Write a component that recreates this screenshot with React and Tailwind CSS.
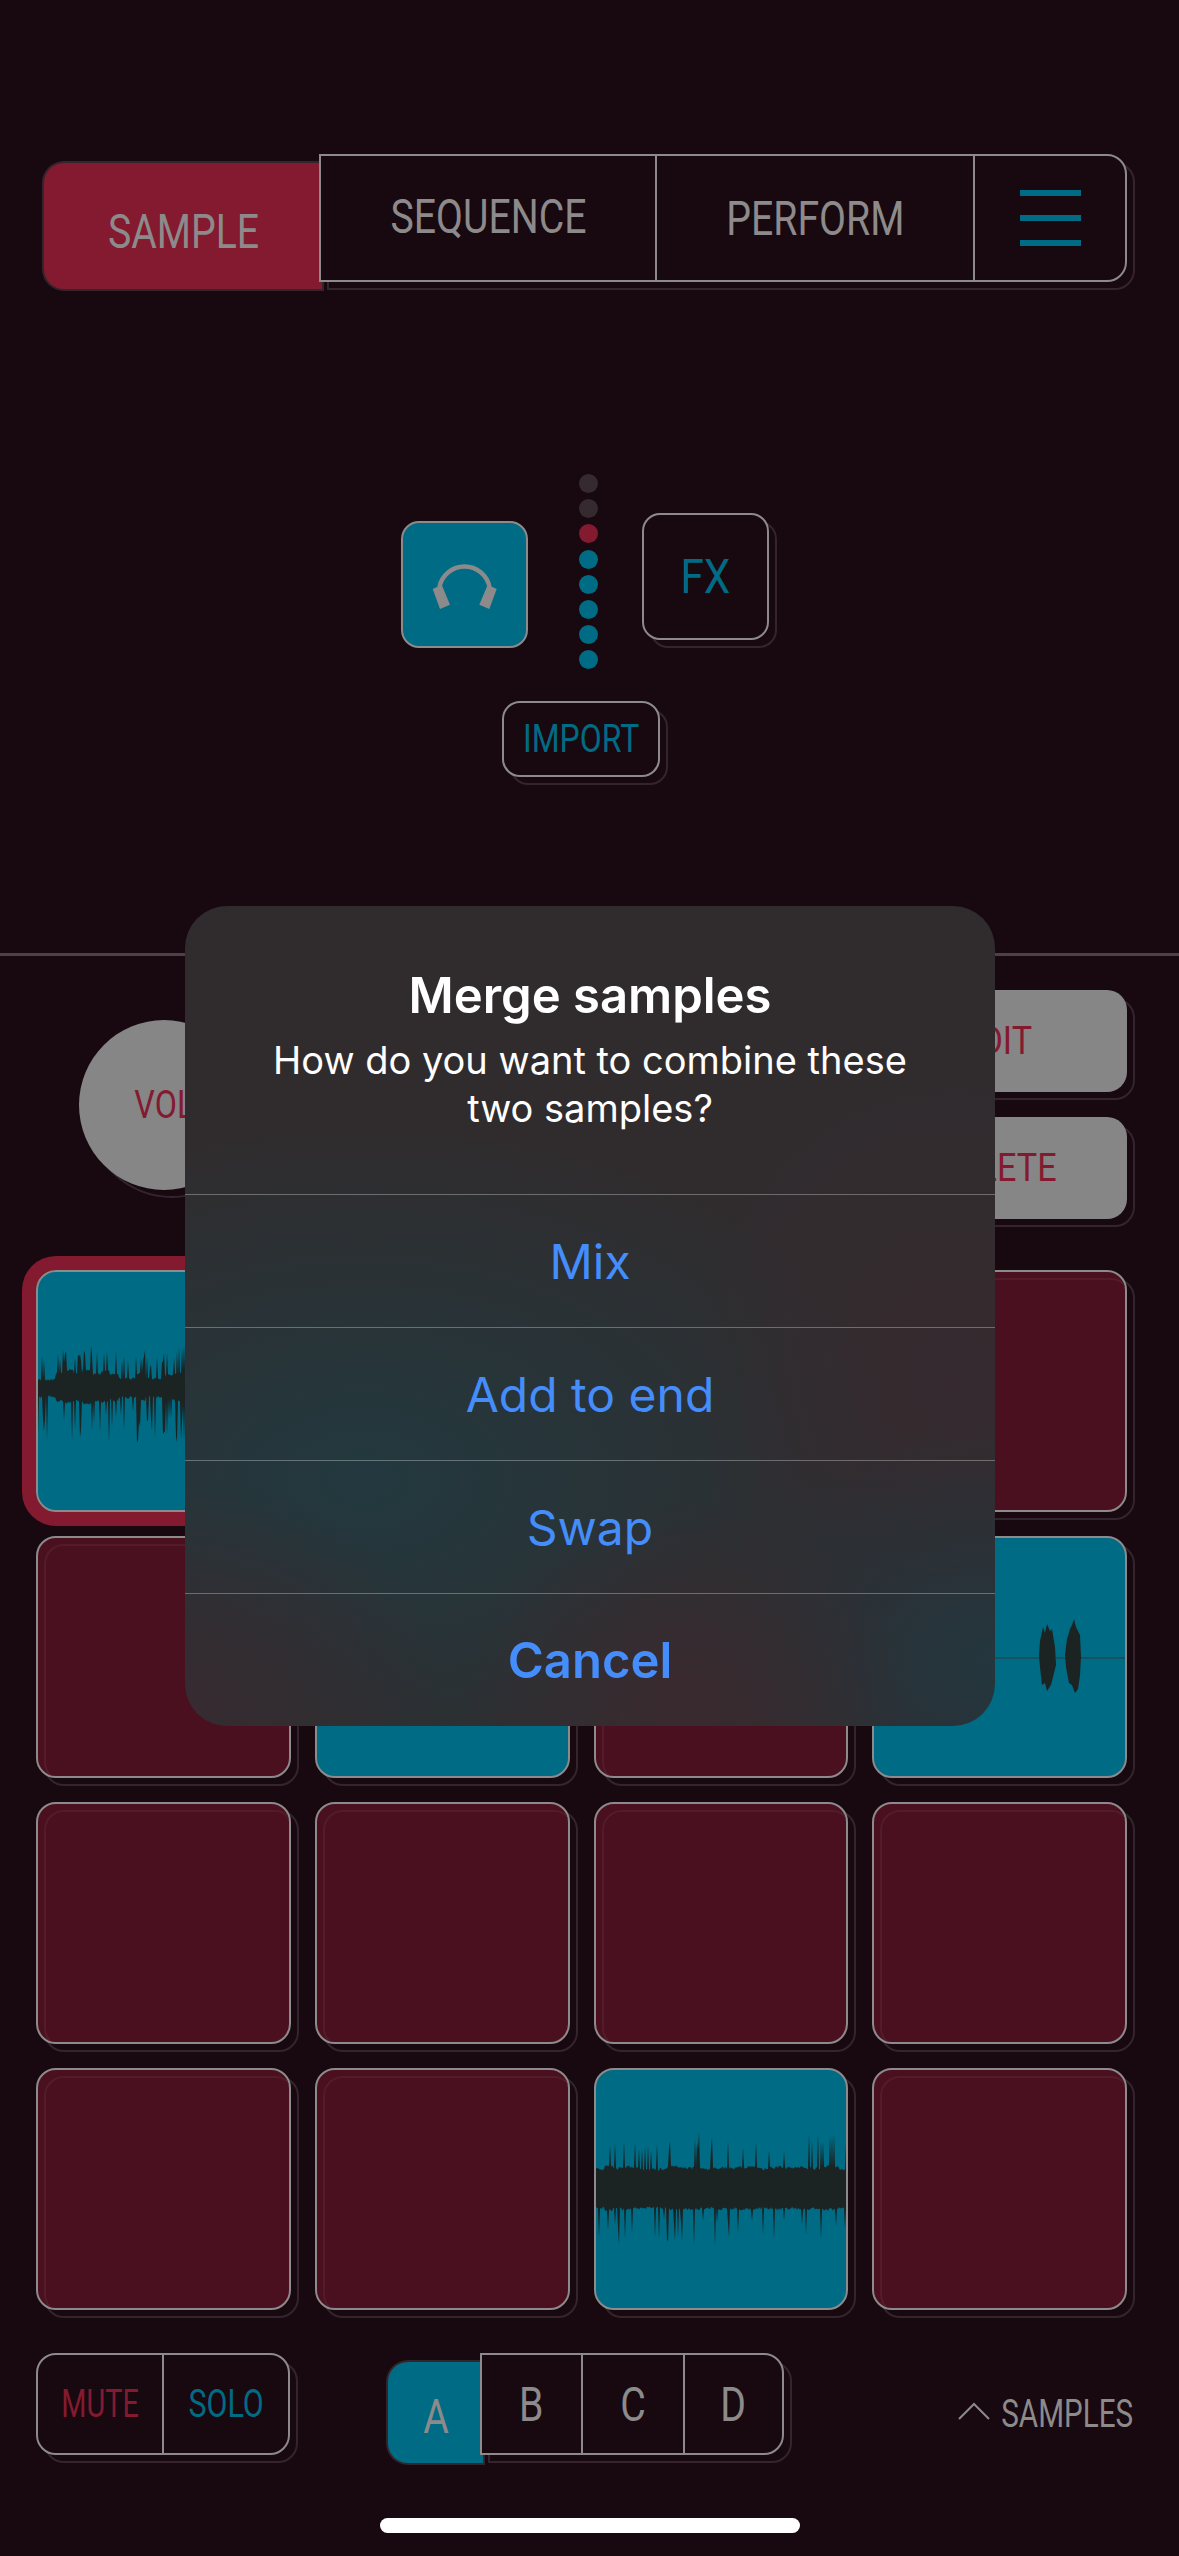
import React from 'react';

const FONT = 'font-["Roboto","Liberation_Sans",sans-serif]';

// seeded noise so the waveforms stay the same on every render
function makeRand(seed) {
  let s = seed;
  return () => {
    s = (s * 16807) % 2147483647;
    return (s - 1) / 2147483646;
  };
}

function buildWave(seed, w, opts) {
  const r = makeRand(seed);
  const top = [];
  const bot = [];
  let swell = 0;
  for (let x = 0; x <= w; x += 1) {
    if (x % 9 === 0) swell = r() * opts.jag;
    let up = opts.bodyUp + swell + r() * 3;
    let down = opts.bodyDown + swell * 0.7 + r() * 3;
    if (r() < opts.chance) up += (0.4 + r() * 0.6) * opts.spikeUp;
    if (r() < opts.chance) down += (0.3 + r() * 0.7) * opts.spikeDown;
    top.push(`${x},${(opts.mid - up).toFixed(1)}`);
    bot.unshift(`${x},${(opts.mid + down).toFixed(1)}`);
  }
  return `M${top.join('L')}L${bot.join('L')}Z`;
}

function Waveform({ seed, w, h, opts }) {
  return (
    <svg width={w} height={h} viewBox={`0 0 ${w} ${h}`}>
      <path d={buildWave(seed, w, opts)} fill="#1b2323" />
    </svg>
  );
}

function Blobs() {
  return (
    <svg width="250" height="80" viewBox="0 0 250 80">
      <path d="M0 41H250" stroke="#1a4a58" strokeWidth="1.5" />
      <path d="M165 24L168 10L170 16L172 7L175 14L177 12L180 30L181 48L178 60L176 68L172 74L170 66L167 68L165 50L164 38Z" fill="#1b2323" />
      <path d="M192 22L195 12L197 8L199 2L201 10L205 18L206 40L205 58L203 72L200 76L197 68L194 66L191 50L190 38Z" fill="#1b2323" />
    </svg>
  );
}

// the faint outline that sits behind raised controls, 8px down and right
function Ghost({ radius }) {
  return <div className={`absolute top-2 left-2 -right-2 -bottom-2 border-2 border-[#33252b] pointer-events-none ${radius}`}></div>;
}

function Squeezed({ children, className, scale = 'scale-x-[0.8]' }) {
  return <span className={`inline-block whitespace-nowrap ${FONT} ${scale} ${className}`}>{children}</span>;
}

function TabCell({ children, className = '' }) {
  return <div className={`flex items-center justify-center ${className}`}>{children}</div>;
}

function Pad({ kind, children, selected }) {
  const fill = kind === 'teal' ? 'bg-[#006b84]' : 'bg-[#4a101f]';
  return (
    <div className={`relative h-[242px] rounded-[20px] ${selected ? 'shadow-[0_0_0_14px_#841a2f]' : ''}`}>
      {!selected && <Ghost radius="rounded-[20px]" />}
      <div className={`relative flex h-full items-center justify-center overflow-hidden rounded-[20px] border-2 border-[#8c8a8a] ${fill}`}>
        {kind === 'red' && <div className="absolute top-[6px] left-[6px] h-full w-full rounded-[20px] border-2 border-[#521c2b]"></div>}
        <div className="relative">{children}</div>
      </div>
    </div>
  );
}

const dots = ['#352a2d', '#352a2d', '#841a2f', '#006b84', '#006b84', '#006b84', '#006b84', '#006b84'];

export default function App() {
  return (
    <div className={`relative h-[2556px] w-[1179px] overflow-hidden bg-[#18080f] ${FONT}`}>
      {/* Main tabs */}
      <div className="flex items-start pt-[154px] pl-[44px]">
        <div className="mt-[9px] flex h-[126px] w-[278px] items-center justify-center rounded-l-[20px] bg-[#841a2f] pt-[10px] shadow-[0_0_0_2px_#33252b]">
          <Squeezed className="text-[49px] leading-none text-[#8c8a8a]">SAMPLE</Squeezed>
        </div>
        <div className="relative -ml-[3px] h-[128px] w-[808px]">
          <Ghost radius="rounded-r-[20px]" />
          <div className="relative flex h-full rounded-r-[20px] border-2 border-[#8c8a8a] bg-[#18080f]">
            <TabCell className="w-[336px] border-r-2 border-[#8c8a8a] pb-[4px]">
              <Squeezed className="text-[49px] leading-none text-[#8c8a8a]">SEQUENCE</Squeezed>
            </TabCell>
            <TabCell className="w-[318px] border-r-2 border-[#8c8a8a]">
              <Squeezed className="text-[49px] leading-none text-[#8c8a8a]">PERFORM</Squeezed>
            </TabCell>
            <TabCell className="flex-1 flex-col gap-[19px]">
              <div className="h-[6px] w-[61px] bg-[#006b84]"></div>
              <div className="h-[6px] w-[61px] bg-[#006b84]"></div>
              <div className="h-[6px] w-[61px] bg-[#006b84]"></div>
            </TabCell>
          </div>
        </div>
      </div>

      {/* Monitor, meter, FX */}
      <div className="mt-[185px] ml-[401px] flex items-start">
        <div className="mt-[47px] flex h-[127px] w-[127px] items-center justify-center rounded-[18px] border-2 border-[#8c8a8a] bg-[#006b84]">
          <svg width="70" height="54" viewBox="0 0 70 54">
            <path d="M9.5 29A25.5 25.5 0 0 1 59.5 29" stroke="#8c8a8a" strokeWidth="4.5" fill="none" />
            <path d="M2.7 31L11.7 26.7L20 46.7L10 51Z" fill="#8c8a8a" />
            <path d="M66.7 31L57.7 26.7L49.3 46.7L59.3 51Z" fill="#8c8a8a" />
          </svg>
        </div>
        <div className="ml-[51px] flex w-[19px] flex-col gap-[6.2px]">
          {dots.map((c, i) => (
            <div key={i} className="h-[19px] w-[19px] rounded-full" style={{ backgroundColor: c }}></div>
          ))}
        </div>
        <div className="relative mt-[39px] ml-[44px] h-[127px] w-[127px]">
          <Ghost radius="rounded-[18px]" />
          <div className="relative flex h-full items-center justify-center rounded-[18px] border-2 border-[#8c8a8a] bg-[#18080f]">
            <Squeezed scale="scale-x-[0.88]" className="text-[48px] leading-none text-[#006b84]">FX</Squeezed>
          </div>
        </div>
      </div>

      <div className="relative mt-[32px] ml-[502px] h-[76px] w-[158px]">
        <Ghost radius="rounded-[18px]" />
        <div className="relative flex h-full items-center justify-center rounded-[18px] border-2 border-[#8c8a8a] bg-[#18080f]">
          <Squeezed scale="scale-x-[0.84]" className="text-[38px] leading-none text-[#006b84]">IMPORT</Squeezed>
        </div>
      </div>

      <div className="mt-[176px] h-[3px] bg-[#4f4048]"></div>

      {/* Volume and sample actions */}
      <div className="mt-[34px] flex items-start justify-between pr-[52px] pl-[79px]">
        <div className="relative mt-[30px] h-[170px] w-[170px]">
          <Ghost radius="rounded-full" />
          <div className="relative flex h-full items-center justify-center rounded-full bg-[#868686]">
            <Squeezed scale="scale-x-[0.85]" className="text-[38px] leading-none text-[#841a2f]">VOL</Squeezed>
          </div>
        </div>
        <div className="flex w-[260px] flex-col gap-[25px]">
          {['EDIT', 'DELETE'].map((label) => (
            <div key={label} className="relative h-[102px]">
              <Ghost radius="rounded-[20px]" />
              <div className="relative flex h-full items-center justify-center rounded-[20px] bg-[#868686]">
                <Squeezed scale="scale-x-[0.9]" className="text-[38px] leading-none text-[#841a2f]">{label}</Squeezed>
              </div>
            </div>
          ))}
        </div>
      </div>

      {/* Pads */}
      <div className="mt-[51px] grid grid-cols-4 gap-x-[24px] gap-y-[24px] pr-[52px] pl-[36px]">
        <Pad kind="teal" selected>
          <Waveform seed={77} w={250} h={120} opts={{ mid: 60, bodyUp: 10, bodyDown: 4, jag: 10, chance: 0.3, spikeUp: 26, spikeDown: 44 }} />
        </Pad>
        <Pad kind="red" />
        <Pad kind="red" />
        <Pad kind="red" />
        <Pad kind="red" />
        <Pad kind="teal" />
        <Pad kind="red" />
        <Pad kind="teal">
          <Blobs />
        </Pad>
        <Pad kind="red" />
        <Pad kind="red" />
        <Pad kind="red" />
        <Pad kind="red" />
        <Pad kind="red" />
        <Pad kind="red" />
        <Pad kind="teal">
          <Waveform seed={4242} w={250} h={120} opts={{ mid: 60, bodyUp: 18, bodyDown: 17, jag: 3, chance: 0.13, spikeUp: 36, spikeDown: 38 }} />
        </Pad>
        <Pad kind="red" />
      </div>

      {/* Bottom controls */}
      <div className="mt-[43px] flex items-start pl-[36px]">
        <div className="relative h-[102px] w-[254px]">
          <Ghost radius="rounded-[20px]" />
          <div className="relative flex h-full rounded-[20px] border-2 border-[#8c8a8a] bg-[#18080f]">
            <TabCell className="w-[126px] border-r-2 border-[#8c8a8a]">
              <Squeezed scale="scale-x-[0.76]" className="text-[38px] leading-none text-[#841a2f]">MUTE</Squeezed>
            </TabCell>
            <TabCell className="flex-1">
              <Squeezed scale="scale-x-[0.8]" className="text-[38px] leading-none text-[#006b84]">SOLO</Squeezed>
            </TabCell>
          </div>
        </div>
        <div className="mt-[9px] ml-[98px] flex h-[101px] w-[95px] items-center justify-center rounded-l-[20px] bg-[#006b84] pt-[8px] shadow-[0_0_0_2px_#33252b]">
          <Squeezed className="text-[49px] leading-none text-[#8c8a8a]">A</Squeezed>
        </div>
        <div className="relative -ml-[3px] h-[102px] w-[304px]">
          <Ghost radius="rounded-r-[20px]" />
          <div className="relative flex h-full rounded-r-[20px] border-2 border-[#8c8a8a] bg-[#18080f]">
            <TabCell className="w-[101px] border-r-2 border-[#8c8a8a]">
              <Squeezed className="text-[49px] leading-none text-[#8c8a8a]">B</Squeezed>
            </TabCell>
            <TabCell className="w-[102px] border-r-2 border-[#8c8a8a]">
              <Squeezed className="text-[49px] leading-none text-[#8c8a8a]">C</Squeezed>
            </TabCell>
            <TabCell className="flex-1">
              <Squeezed className="text-[49px] leading-none text-[#8c8a8a]">D</Squeezed>
            </TabCell>
          </div>
        </div>
        <div className="mt-[42px] ml-auto flex items-center pr-[46px]">
          <svg className="-mt-[6px]" width="32" height="18" viewBox="0 0 32 18">
            <path d="M1 17L16 2L31 17" stroke="#8c8a8a" strokeWidth="2" fill="none" />
          </svg>
          <Squeezed scale="scale-x-[0.78]" className="-ml-[26px] origin-right text-[38px] leading-none text-[#8c8a8a]">SAMPLES</Squeezed>
        </div>
      </div>

      <div className="mx-auto mt-[55px] h-[15px] w-[420px] rounded-full bg-white"></div>

      {/* Merge dialog */}
      <div className="absolute top-[906px] left-[185px] w-[810px] overflow-hidden rounded-[42px] bg-[#302c2e] bg-[radial-gradient(ellipse_240px_220px_at_2%_97%,#362b30_0%,#362b3000_100%),radial-gradient(ellipse_220px_200px_at_62%_97%,#3a2a2f_0%,#3a2a2f00_100%),radial-gradient(ellipse_300px_240px_at_99%_92%,#24363e_0%,#24363e00_100%),radial-gradient(ellipse_260px_300px_at_95%_58%,#362a2f_0%,#362a2f00_100%),radial-gradient(ellipse_560px_350px_at_22%_70%,#22393f_0%,#22393f00_100%)] text-center font-['Inter',sans-serif]">
        <div className="h-[288px] pt-[60px]">
          <div className="text-[49px] leading-[60px] font-semibold text-white">Merge samples</div>
          <div className="mx-auto mt-[10px] w-[680px] text-[38px] leading-[48px] text-white">How do you want to combine these two samples?</div>
        </div>
        {['Mix', 'Add to end', 'Swap', 'Cancel'].map((label) => (
          <div key={label} className={`flex h-[133px] items-center justify-center border-t border-white/30 pt-[2px] text-[#448dfb] ${label === 'Cancel' ? 'text-[49px] font-semibold' : 'text-[48px]'}`}>
            {label}
          </div>
        ))}
      </div>
    </div>
  );
}
